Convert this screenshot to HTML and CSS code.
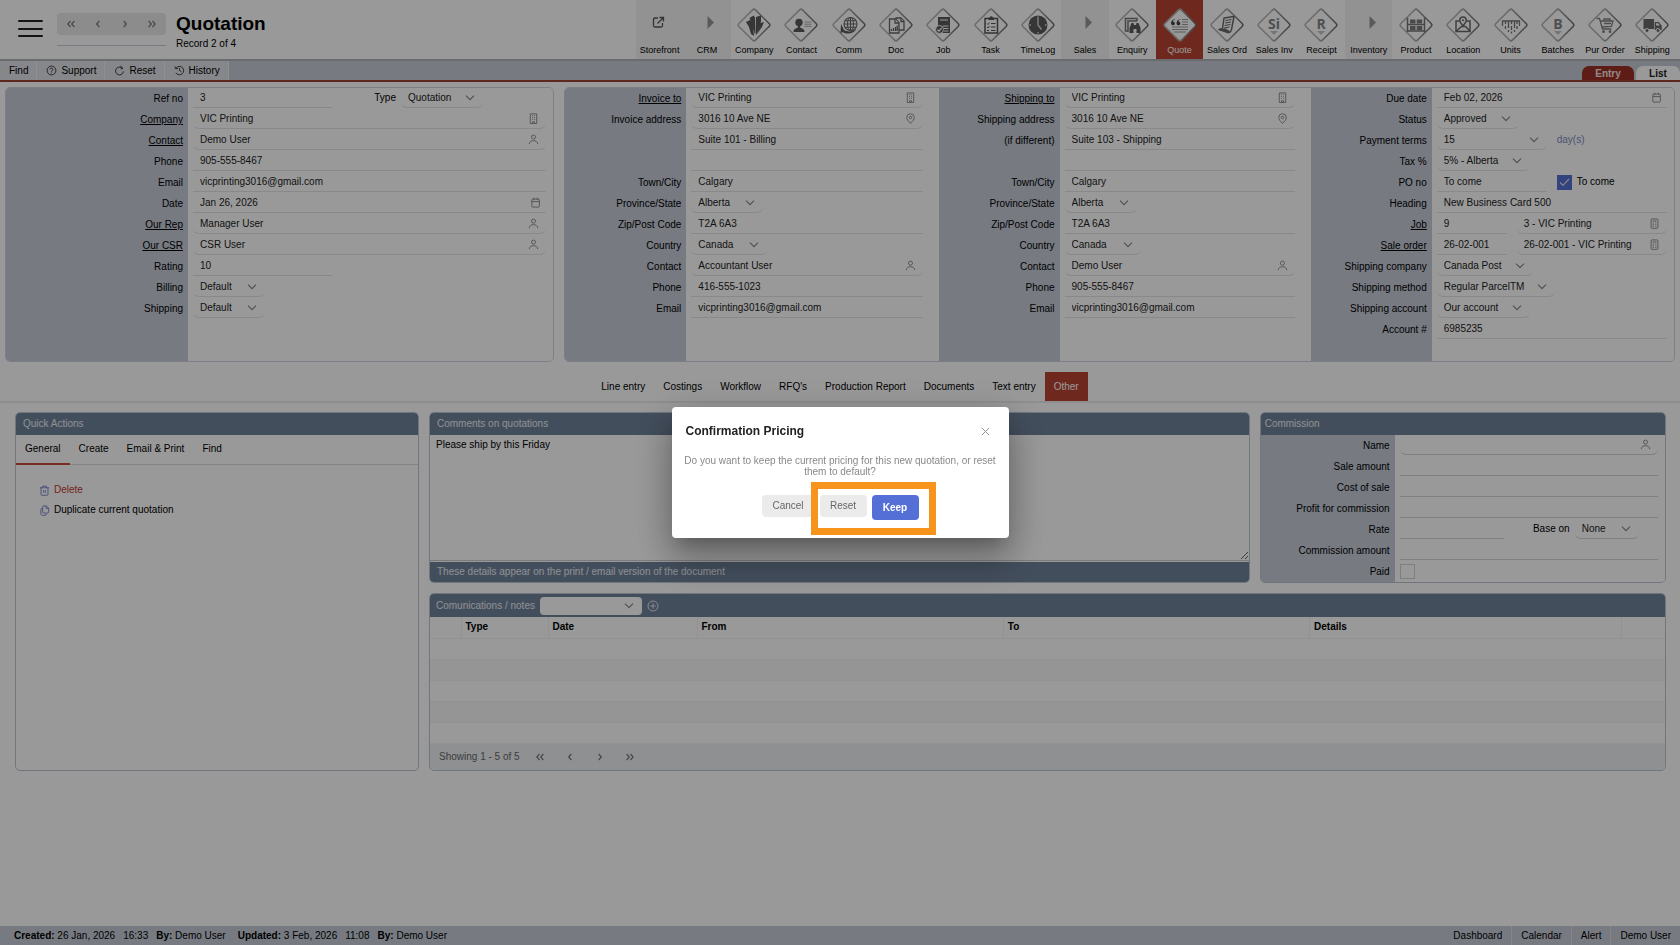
FILE: index.html
```html
<!DOCTYPE html>
<html lang="en">
<head>
<meta charset="utf-8">
<title>Quotation</title>
<link rel="stylesheet" href="styles.css">
</head>
<body>
<svg class="defs" aria-hidden="true">
  <defs>
    <linearGradient id="edge" x1="0" y1="1" x2="1" y2="0"><stop offset="0.4" stop-color="#b4b4b4"/><stop offset="1" stop-color="#6c6c6c"/></linearGradient>
    <symbol id="diamond" viewBox="0 0 36 36"><rect x="6.3" y="6.3" width="23.4" height="23.4" rx="2" transform="rotate(45 18 18)" fill="#fff" stroke="url(#edge)" stroke-width="1.5"/></symbol>
    <symbol id="person" viewBox="0 0 12 12"><circle cx="6" cy="3.4" r="2.2"/><path d="M1.4 11c.2-2.6 2-3.7 4.6-3.7s4.4 1.100 4.600 3.700"/></symbol>
    <symbol id="building" viewBox="0 0 12 12"><path d="M2.500 1h7v10.500h-7zM4.500 3h1M6.700 3h1M4.500 5h1M6.700 5h1M4.500 7h1M6.700 7h1M5 11.500v-2h2v2"/></symbol>
    <symbol id="pin" viewBox="0 0 12 12"><path d="M6 11.300C3.500 9 1.900 7 1.900 4.900a4.100 4.100 0 0 1 8.200 0C10.100 7 8.500 9 6 11.300z"/><circle cx="6" cy="4.900" r="1.300"/></symbol>
    <symbol id="calendar" viewBox="0 0 12 12"><rect x="2" y="2.200" width="8.200" height="8.800" rx="1"/><path d="M2 5h8.200M4.200 .8v2.600M8 .8v2.600"/></symbol>
    <symbol id="sheet" viewBox="0 0 12 12"><rect x="2.300" y="1" width="7.400" height="10.300" rx="1"/><path d="M4 3.200h4M4 5.400h1.400M6.800 5.400H8M4 7.300h1.400M6.800 7.300H8M4 9.200h1.400M6.800 9.200H8"/></symbol>
    <symbol id="left" viewBox="0 0 10 10"><path d="M6.100 2.500 3.900 5l2.200 2.500"/></symbol>
    <symbol id="right" viewBox="0 0 10 10"><path d="M3.900 2.500 6.100 5 3.900 7.500"/></symbol>
    <symbol id="first" viewBox="0 0 10 10"><path d="M4.600 2.500 2.400 5l2.200 2.500M7.800 2.500 5.600 5l2.200 2.500"/></symbol>
    <symbol id="last" viewBox="0 0 10 10"><path d="M2.200 2.500 4.400 5 2.200 7.500M5.400 2.500 7.600 5 5.400 7.500"/></symbol>
  </defs>
</svg>

<header class="top">
  <button class="burger" aria-label="Menu"><span></span><span></span><span></span></button>
  <div class="stepper">
    <div class="steps">
      <button aria-label="First record"><svg class="ic"><use href="#first"/></svg></button>
      <button aria-label="Previous record"><svg class="ic"><use href="#left"/></svg></button>
      <button aria-label="Next record"><svg class="ic"><use href="#right"/></svg></button>
      <button aria-label="Last record"><svg class="ic"><use href="#last"/></svg></button>
    </div>
  </div>
  <div class="heading"><h1>Quotation</h1><p>Record 2 of 4</p></div>
  <nav class="modules">
    <a href="#" class="group"><svg viewBox="0 0 36 36" fill="none" stroke="#555" stroke-width="1.300"><path d="M16 11h-3a1.500 1.500 0 0 0-1.500 1.500v6A1.500 1.500 0 0 0 13 20h6a1.500 1.500 0 0 0 1.500-1.500V16M17.500 10.500h4v4M21 11l-5.500 5.500"/></svg>Storefront</a>
    <a href="#" class="group"><svg viewBox="0 0 36 36"><path d="M18.500 9l6.500 6.500-6.500 6.500z" fill="#979797"/></svg>CRM</a>
    <a href="#"><svg viewBox="0 0 36 36"><use href="#diamond"/><path d="M10 15l4-2 3 5 1 11-3-2-2-7zM13.500 11l4-2.500 1.500 2V28l-2-8zM20 10l5-1.500v6L20.500 28l-1-2zM24.500 16l3.500-1-2 5-5 7z" fill="#5a5a5a"/></svg>Company</a>
    <a href="#"><svg viewBox="0 0 36 36"><use href="#diamond"/><circle cx="16" cy="15.500" r="3.700" fill="#5a5a5a"/><path d="M10.500 25c0-3 2-3.600 4.300-4.300v-3h2.400v3c2.300.7 4.300 1.300 4.300 4.300z" fill="#5a5a5a"/><path d="M21.500 15h7M21.500 17.200h7M21.500 19.400h7" stroke="#aaa"/></svg>Contact</a>
    <a href="#"><svg viewBox="0 0 36 36"><use href="#diamond"/><g fill="none" stroke="#666" stroke-width="1.100"><circle cx="19.500" cy="17" r="6.500"/><ellipse cx="19.500" cy="17" rx="3" ry="6.500"/><path d="M13 17h13M14 13.700h11M14 20.300h11M19.500 10.500v13"/></g><path d="M10 17l3 6c4 2.500 9 1.500 12.500-1.500-2 5-9 6.500-14 3.500l-2 1.500z" fill="#5a5a5a"/></svg>Comm</a>
    <a href="#"><svg viewBox="0 0 36 36"><use href="#diamond"/><g fill="#fff" stroke="#666" stroke-width="1.300"><path d="M18 11h5l3 3v9h-8z"/><path d="M11.500 12h6l3.500 3.500V26h-9.500z"/><path d="M17 12v4h4M23 11v3.500h3"/><path d="M13.500 24v-2M15.500 24v-3M17.500 24v-4M19.200 24v-5.500"/></g></svg>Doc</a>
    <a href="#"><svg viewBox="0 0 36 36"><use href="#diamond"/><path d="M13 10h12v16H13z" fill="#5a5a5a"/><path d="M15 13h8M18 19h5.500M19 21.500h4.500M19 24h4.500" stroke="#fff"/><circle cx="14.500" cy="22.500" r="4" fill="#5a5a5a" stroke="#fff"/><path d="M12.500 22.500l1.500 1.700 2.700-3.400" fill="none" stroke="#fff" stroke-width="1.200"/></svg>Job</a>
    <a href="#"><svg viewBox="0 0 36 36"><use href="#diamond"/><path d="M12 11.500h12.500V26H12z" fill="#fff" stroke="#555" stroke-width="1.500"/><path d="M15.500 13v-2.500h1.500a1.300 1.300 0 0 1 2.600 0H21V13z" fill="#555"/><path d="M14 16.500l1 1 1.500-2M18 16.500h4.500M14 20l1 1 1.500-2M18 20h4.500M14 23.500h2M18 23.500h4.500" fill="none" stroke="#555"/></svg>Task</a>
    <a href="#"><svg viewBox="0 0 36 36"><use href="#diamond"/><circle cx="18" cy="18" r="9.500" fill="#5a5a5a"/><path d="M18 10.500V18l3.500 4.500M18 9.500v1.500M18 25v1.500M9.500 18H11M25 18h1.500" fill="none" stroke="#ddd" stroke-width="1.300"/></svg>TimeLog</a>
    <a href="#" class="group"><svg viewBox="0 0 36 36"><path d="M18.500 9l6.500 6.500-6.500 6.500z" fill="#979797"/></svg>Sales</a>
    <a href="#"><svg viewBox="0 0 36 36"><use href="#diamond"/><path d="M14 24h-2.500V11.500H23V14M14 25V14h9" fill="none" stroke="#777" stroke-width="1.500"/><path d="M15.500 26v-5l2-5h2l.5 2h2l.5-2h2l2 5v5h-4v-4h-3v4z" fill="#5a5a5a"/></svg>Enquiry</a>
    <a href="#" class="current" aria-current="page"><svg viewBox="0 0 36 36"><use href="#diamond"/><path d="M13 12c-3 .5-4 2.500-4 4.500a1.900 1.900 0 1 0 2-2c0-1 .7-1.600 2-2zM18.500 12c-3 .5-4 2.500-4 4.500a1.900 1.900 0 1 0 2-2c0-1 .7-1.600 2-2z" fill="#444"/><path d="M20 12.500h6M20 15h6M20 17.500h6M10 20h16M10 22.500h16M12 25h12" stroke="#999" stroke-width="1.200"/></svg>Quote</a>
    <a href="#"><svg viewBox="0 0 36 36"><use href="#diamond"/><path d="M15 11l10-1.500-2.500 13c-.5 3-3 3.500-5 2.500L10 22.500l3.500-1z" fill="#fff" stroke="#6a6a6a" stroke-width="1.500" stroke-linejoin="round"/><path d="M16.500 13.500l6-1M16 16l6-1M15.500 18.500l6-1M15 21l5.500-1" stroke="#666" stroke-width="1.200"/><path d="M10 22.500l8 3 3.500-1-5-3z" fill="#6a6a6a"/></svg>Sales Ord</a>
    <a href="#"><svg viewBox="0 0 36 36"><use href="#diamond"/><text x="18" y="21.500" class="glyph">Si</text><path d="M14 24h8l-4 4z" fill="#c4c4c4"/></svg>Sales Inv</a>
    <a href="#"><svg viewBox="0 0 36 36"><use href="#diamond"/><text x="18" y="21.500" class="glyph">R</text><path d="M14 24h8l-4 4z" fill="#c4c4c4"/></svg>Receipt</a>
    <a href="#" class="group"><svg viewBox="0 0 36 36"><path d="M18.500 9l6.500 6.500-6.500 6.500z" fill="#979797"/></svg>Inventory</a>
    <a href="#"><svg viewBox="0 0 36 36"><use href="#diamond"/><path d="M9.500 11v14M26.500 11v14M9.500 17.500h17M9.500 24h17" stroke="#777" stroke-width="1.500"/><path d="M12 12.500h5.500v4H12zM18.700 12.500h5.500v4h-5.500zM12 19h5.500v4.200H12zM18.700 19h5.500v4.200h-5.500z" fill="#7c7c7c"/></svg>Product</a>
    <a href="#"><svg viewBox="0 0 36 36"><use href="#diamond"/><path d="M14.500 14H11v10.500h14V14h-3.500M11.500 24l5-4.500h4l4.500 4.500" fill="none" stroke="#6a6a6a" stroke-width="1.500"/><path d="M18 19c-2-2.300-3.200-4-3.200-5.700a3.200 3.200 0 0 1 6.400 0C21.200 15 20 16.700 18 19z" fill="#fff" stroke="#6a6a6a" stroke-width="1.500"/><circle cx="18" cy="13.300" r="1" fill="#6a6a6a"/></svg>Location</a>
    <a href="#"><svg viewBox="0 0 36 36"><use href="#diamond"/><path d="M9 14h18M9.500 14v5M12.500 14v3M15.500 14v7M18.500 14v3M21.500 14v7M24 14v3M26.500 14v5M12.500 19v3M18.500 19v4M18.500 24.500v2M15.500 23v2M21.500 23v2M24 19v3" stroke="#777" stroke-width="1.300"/></svg>Units</a>
    <a href="#"><svg viewBox="0 0 36 36"><use href="#diamond"/><text x="18" y="21.500" class="glyph">B</text><path d="M14 24h8l-4 4z" fill="#c4c4c4"/></svg>Batches</a>
    <a href="#"><svg viewBox="0 0 36 36"><use href="#diamond"/><path d="M9.500 11.500h3L15.500 22h9M13.500 14h12.500l-1.500 5.500-9.500.5M17 14v-2h6v2M17 16.500h7" fill="none" stroke="#808080" stroke-width="1.300"/><circle cx="16.500" cy="24.700" r="1.400" fill="#808080"/><circle cx="23" cy="24.700" r="1.400" fill="#808080"/></svg>Pur Order</a>
    <a href="#"><svg viewBox="0 0 36 36"><use href="#diamond"/><path d="M9.500 12H20v10H9.500zM20.700 15h4l3 3.500V23h-7z" fill="#6a6a6a"/><path d="M22 16.200h2.200l1.800 2.300h-4z" fill="#fff"/><circle cx="13" cy="23.500" r="2" fill="#6a6a6a" stroke="#fff"/><circle cx="24" cy="23.500" r="2" fill="#6a6a6a" stroke="#fff"/></svg>Shipping</a>
  </nav>
</header>

<div class="toolbar">
  <button>Find</button>
  <button><svg class="tool" viewBox="0 0 12 12"><circle cx="6" cy="6" r="4.800"/><path d="M4.500 4.800a1.500 1.500 0 1 1 2.300 1.300c-.6.300-.8.500-.8 1.100M6 8.200v.8"/></svg>Support</button>
  <button><svg class="tool" viewBox="0 0 12 12"><path d="M9.800 4.500A4.300 4.300 0 1 0 10.300 7M7 1.200l2 1.600-1.600 2"/></svg>Reset</button>
  <button><svg class="tool" viewBox="0 0 12 12"><path d="M2.300 3.300A4.600 4.600 0 1 1 2 8.500M1 1.500l.8 2.700 2.700-.5M6 3.500V6l2 1.300"/></svg>History</button>
  <div class="views"><a href="#" class="on">Entry</a><a href="#">List</a></div>
</div>

<main>
  <section class="record">
    <form class="card">
      <div class="fields main-fields">
        <label for="ref">Ref no</label><div class="cell"><input id="ref" class="w139" value="3"><label for="type" class="inline type-label">Type</label><select id="type" class="w82"><option>Quotation</option></select></div>
        <label for="company"><a href="#">Company</a></label><div class="cell"><span class="pick"><input id="company" value="VIC Printing"><svg class="ic"><use href="#building"/></svg></span></div>
        <label for="contact"><a href="#">Contact</a></label><div class="cell"><span class="pick"><input id="contact" value="Demo User"><svg class="ic"><use href="#person"/></svg></span></div>
        <label for="phone">Phone</label><div class="cell"><input id="phone" value="905-555-8467"></div>
        <label for="email">Email</label><div class="cell"><input id="email" value="vicprinting3016@gmail.com"></div>
        <label for="date">Date</label><div class="cell"><span class="pick flat"><input id="date" value="Jan 26, 2026"><svg class="ic"><use href="#calendar"/></svg></span></div>
        <label for="rep"><a href="#">Our Rep</a></label><div class="cell"><span class="pick"><input id="rep" value="Manager User"><svg class="ic"><use href="#person"/></svg></span></div>
        <label for="csr"><a href="#">Our CSR</a></label><div class="cell"><span class="pick"><input id="csr" value="CSR User"><svg class="ic"><use href="#person"/></svg></span></div>
        <label for="rating">Rating</label><div class="cell"><input id="rating" class="w139" value="10"></div>
        <label for="billing">Billing</label><div class="cell"><select id="billing" class="w72"><option>Default</option></select></div>
        <label for="shipping">Shipping</label><div class="cell"><select id="shipping" class="w72"><option>Default</option></select></div>
      </div>
    </form>
    <form class="card wide">
      <div class="fields address">
        <label for="inv"><a href="#">Invoice to</a></label><div class="cell"><span class="pick"><input id="inv" value="VIC Printing"><svg class="ic"><use href="#building"/></svg></span></div>
        <label for="ia1">Invoice address</label><div class="cell"><span class="pick"><input id="ia1" value="3016 10 Ave NE"><svg class="ic"><use href="#pin"/></svg></span></div>
        <span></span><div class="cell"><input aria-label="Invoice address line 2" value="Suite 101 - Billing"></div>
        <span></span><div class="cell"><input aria-label="Invoice address line 3"></div>
        <label for="icity">Town/City</label><div class="cell"><input id="icity" value="Calgary"></div>
        <label for="iprov">Province/State</label><div class="cell"><select id="iprov" class="w72"><option>Alberta</option></select></div>
        <label for="izip">Zip/Post Code</label><div class="cell"><input id="izip" value="T2A 6A3"></div>
        <label for="icountry">Country</label><div class="cell"><select id="icountry" class="w76"><option>Canada</option></select></div>
        <label for="icontact">Contact</label><div class="cell"><span class="pick"><input id="icontact" value="Accountant User"><svg class="ic"><use href="#person"/></svg></span></div>
        <label for="iphone">Phone</label><div class="cell"><input id="iphone" value="416-555-1023"></div>
        <label for="iemail">Email</label><div class="cell"><input id="iemail" value="vicprinting3016@gmail.com"></div>
      </div>
      <div class="fields address">
        <label for="shp"><a href="#">Shipping to</a></label><div class="cell"><span class="pick"><input id="shp" value="VIC Printing"><svg class="ic"><use href="#building"/></svg></span></div>
        <label for="sa1">Shipping address</label><div class="cell"><span class="pick"><input id="sa1" value="3016 10 Ave NE"><svg class="ic"><use href="#pin"/></svg></span></div>
        <label for="sa2">(if different)</label><div class="cell"><input id="sa2" value="Suite 103 - Shipping"></div>
        <span></span><div class="cell"><input aria-label="Shipping address line 3"></div>
        <label for="scity">Town/City</label><div class="cell"><input id="scity" value="Calgary"></div>
        <label for="sprov">Province/State</label><div class="cell"><select id="sprov" class="w72"><option>Alberta</option></select></div>
        <label for="szip">Zip/Post Code</label><div class="cell"><input id="szip" value="T2A 6A3"></div>
        <label for="scountry">Country</label><div class="cell"><select id="scountry" class="w76"><option>Canada</option></select></div>
        <label for="scontact">Contact</label><div class="cell"><span class="pick"><input id="scontact" value="Demo User"><svg class="ic"><use href="#person"/></svg></span></div>
        <label for="sphone">Phone</label><div class="cell"><input id="sphone" value="905-555-8467"></div>
        <label for="semail">Email</label><div class="cell"><input id="semail" value="vicprinting3016@gmail.com"></div>
      </div>
      <div class="fields terms">
        <label for="due">Due date</label><div class="cell"><span class="pick flat"><input id="due" value="Feb 02, 2026"><svg class="ic"><use href="#calendar"/></svg></span></div>
        <label for="status">Status</label><div class="cell"><select id="status" class="w82"><option>Approved</option></select></div>
        <label for="pay">Payment terms</label><div class="cell"><select id="pay" class="w110"><option>15</option></select><span class="unit">day(s)</span></div>
        <label for="tax">Tax %</label><div class="cell"><select id="tax" class="w93"><option>5% - Alberta</option></select></div>
        <label for="po">PO no</label><div class="cell"><input id="po" class="w110" value="To come"><label class="tick"><input type="checkbox" checked>To come</label></div>
        <label for="head">Heading</label><div class="cell"><input id="head" value="New Business Card 500"></div>
        <label for="job"><a href="#">Job</a></label><div class="cell"><input id="job" class="w70" value="9"><span class="pick second"><input aria-label="Job name" value="3 - VIC Printing"><svg class="ic"><use href="#sheet"/></svg></span></div>
        <label for="so"><a href="#">Sale order</a></label><div class="cell"><input id="so" class="w70" value="26-02-001"><span class="pick second"><input aria-label="Sale order name" value="26-02-001 - VIC Printing"><svg class="ic"><use href="#sheet"/></svg></span></div>
        <label for="sco">Shipping company</label><div class="cell"><select id="sco" class="w96"><option>Canada Post</option></select></div>
        <label for="sme">Shipping method</label><div class="cell"><select id="sme" class="w118"><option>Regular ParcelTM</option></select></div>
        <label for="sac">Shipping account</label><div class="cell"><select id="sac" class="w93"><option>Our account</option></select></div>
        <label for="acc">Account #</label><div class="cell"><input id="acc" value="6985235"></div>
      </div>
    </form>
  </section>

  <nav class="tabs">
    <a href="#">Line entry</a><a href="#">Costings</a><a href="#">Workflow</a><a href="#">RFQ's</a><a href="#">Production Report</a><a href="#">Documents</a><a href="#">Text entry</a><a href="#" class="on">Other</a>
  </nav>

  <div class="other">
    <section class="panel quick">
      <h2>Quick Actions</h2>
      <nav class="subtabs"><a href="#" class="on">General</a><a href="#">Create</a><a href="#">Email &amp; Print</a><a href="#">Find</a></nav>
      <ul class="actions">
        <li><button class="danger"><svg class="act" viewBox="0 0 12 12"><path d="M1 3h10M4 3V1.200h4V3M2.200 3v7.200a1 1 0 0 0 1 1h5.600a1 1 0 0 0 1-1V3M5 5.500v3M7 5.500v3"/></svg>Delete</button></li>
        <li><button><svg class="act" viewBox="0 0 12 12"><path d="M4 2.500A1.300 1.300 0 0 1 5.300 1H8l2.500 2.500v4a1.300 1.300 0 0 1-1.300 1.300H5.300A1.300 1.300 0 0 1 4 7.500zM7.700 1v2.700h2.700M4 3.300a2 2 0 0 0-2 2V9.300a2 2 0 0 0 2 2h2.500a2 2 0 0 0 1.800-1.800"/></svg>Duplicate current quotation</button></li>
      </ul>
    </section>

    <div class="right">
      <section class="panel comments">
        <h2><label for="notes">Comments on quotations</label></h2>
        <textarea id="notes">Please ship by this Friday</textarea>
        <p class="bar">These details appear on the print / email version of the document</p>
      </section>

      <form class="panel commission">
        <h2>Commission</h2>
        <div class="fields comm">
          <label for="cname">Name</label><div class="cell"><span class="pick"><input id="cname"><svg class="ic"><use href="#person"/></svg></span></div>
          <label for="camt">Sale amount</label><div class="cell"><input id="camt"></div>
          <label for="ccost">Cost of sale</label><div class="cell"><input id="ccost"></div>
          <label for="cprof">Profit for commission</label><div class="cell"><input id="cprof"></div>
          <label for="crate">Rate</label><div class="cell"><input id="crate" class="w104"><label for="cbase" class="inline base-label">Base on</label><select id="cbase" class="w64"><option>None</option></select></div>
          <label for="cam">Commission amount</label><div class="cell"><input id="cam"></div>
          <label for="paid">Paid</label><div class="cell"><input id="paid" type="checkbox"></div>
        </div>
      </form>

      <section class="panel log">
        <div class="log-head"><label for="note">Comunications / notes</label><select id="note"><option></option></select><button aria-label="Add note"><svg viewBox="0 0 12 12"><circle cx="6" cy="6" r="5"/><path d="M6 3.300v5.400M3.300 6h5.400"/></svg></button></div>
        <table>
          <colgroup><col class="c0"><col class="c1"><col class="c2"><col class="c3"><col class="c3"><col class="c4"><col></colgroup>
          <thead><tr><th></th><th>Type</th><th>Date</th><th>From</th><th>To</th><th>Details</th><th></th></tr></thead>
          <tbody>
            <tr><td colspan="7"></td></tr><tr><td colspan="7"></td></tr><tr><td colspan="7"></td></tr><tr><td colspan="7"></td></tr><tr><td colspan="7"></td></tr>
          </tbody>
        </table>
        <div class="pager"><span>Showing 1 - 5 of 5</span>
          <button aria-label="First page"><svg class="ic"><use href="#first"/></svg></button>
          <button aria-label="Previous page"><svg class="ic"><use href="#left"/></svg></button>
          <button aria-label="Next page"><svg class="ic"><use href="#right"/></svg></button>
          <button aria-label="Last page"><svg class="ic"><use href="#last"/></svg></button>
        </div>
      </section>
    </div>
  </div>
</main>

<footer>
  <div class="stamps"><span><b>Created:</b> 26 Jan, 2026</span><span>16:33</span><span class="by"><b>By:</b> Demo User</span><span><b>Updated:</b> 3 Feb, 2026</span><span>11:08</span><span><b>By:</b> Demo User</span></div>
  <nav class="foot-links"><a href="#">Dashboard</a><a href="#">Calendar</a><a href="#">Alert</a><a href="#">Demo User</a></nav>
</footer>

<div class="backdrop">
  <div class="dialog" role="dialog" aria-modal="true" aria-labelledby="dlg">
    <div class="dialog-head"><h2 id="dlg">Confirmation Pricing</h2><button aria-label="Close"><svg viewBox="0 0 10 10"><path d="M1 1l8 8M9 1L1 9"/></svg></button></div>
    <p>Do you want to keep the current pricing for this new quotation, or reset them to default?</p>
    <div class="choices"><button>Cancel</button><button>Reset</button><button class="primary">Keep</button></div>
    <div class="callout"></div>
  </div>
</div>
</body>
</html>
```

FILE: styles.css
```css
* { box-sizing: border-box; }
body {
  margin: 0;
  min-height: 100vh;
  display: flex;
  flex-direction: column;
  background: #fff;
  color: #000;
  font: 10px/14px "Liberation Sans", Arial, sans-serif;
}
a { color: inherit; text-decoration: none; }
button, input, select, textarea { font: inherit; color: inherit; border: 0; margin: 0; padding: 0; background: none; border-radius: 0; outline: 0; }
h1, h2, p, ul { margin: 0; padding: 0; font-size: 10px; }
.defs { position: absolute; width: 0; height: 0; }
.ic { width: 12px; height: 12px; fill: none; stroke: #777; stroke-width: 1; }

/* header */
.top { display: flex; height: 61px; padding-left: 18px; border-bottom: 2px solid #b0b2b8; }
.burger { width: 25px; margin: 20px 14px 0 0; height: 17px; display: flex; flex-direction: column; justify-content: space-between; }
.burger span { width: 25px; height: 2px; border-radius: 1px; background: #222; }
.stepper { width: 109px; height: 46px; padding-top: 13px; border-bottom: 1px solid #c6ccd8; }
.steps { display: flex; height: 22px; border-radius: 4px; background: #e9e9e9; }
.steps button { flex: 1; display: grid; place-items: center; }
.heading { margin-left: 10px; padding-top: 12px; }
.heading h1 { font-size: 19px; line-height: 24px; }
.heading p { margin-top: 1px; font-size: 10px; }
.modules { margin-left: auto; width: 1044px; padding-right: 4px; display: grid; grid-template-columns: repeat(22, 1fr); font-size: 9px; line-height: 12px; }
.modules a { display: flex; flex-direction: column; align-items: center; padding-top: 7px; white-space: nowrap; }
.modules svg { width: 36px; height: 36px; margin-bottom: 1px; }
.modules .group { background: #f3f3f3; }
.modules .current { background: #b94333; color: #fff; }
.glyph { font: bold 14px "Open Sans", sans-serif; text-anchor: middle; fill: #858585; }

/* toolbar */
.toolbar { display: flex; height: 21px; background: #c6ccd8; border-bottom: 2px solid #9d4438; }
.toolbar > button { display: flex; align-items: center; gap: 4px; padding: 0 8px 0 9px; background: #dfe1e7; border-right: 1px solid #eceef2; }
.tool { width: 11px; height: 11px; fill: none; stroke: #333; stroke-width: 1; }
.views { margin-left: auto; display: flex; gap: 2px; padding-top: 5px; }
.views a { width: 44px; text-align: center; font-weight: bold; line-height: 15px; background: #fff; border-radius: 7px 7px 0 0; color: #222; }
.views .on { width: 52px; background: #9c3023; color: #f4e4e2; }

/* record form */
main { flex: 1; padding-top: 5px; }
.record { display: grid; grid-template-columns: 549fr 1110fr; gap: 10px; padding: 0 5px; }
.card { border: 1px solid #cfd3de; border-radius: 5px; overflow: hidden; }
.wide { display: grid; grid-template-columns: 374fr 373fr 364fr; }
.fields { --side: 121px; display: grid; grid-template-columns: var(--side) 1fr; grid-template-rows: repeat(13, 21px); background: linear-gradient(to right, #c6ccd8 var(--side), #fff var(--side)); }
.main-fields { --side: 182px; }
.comm { --side: 134px; grid-template-rows: repeat(7, 21px); }
.fields > label { padding-right: 5px; text-align: right; line-height: 22px; }
.fields > label a { text-decoration: underline; }
.cell { display: flex; min-width: 0; padding: 0 16px 1px 5px; color: #222; }
.main-fields .cell, .terms .cell, .comm .cell { padding-right: 7px; }
.cell input, .cell select { min-width: 0; height: 20px; border-bottom: 1px solid #e4e4e6; padding: 0 0 1px 7px; }
.cell select { padding: 1px 0 0 7px; }
.cell > input:not([class]):not([type]) { flex: 1; }
.pick { position: relative; flex: 1; display: flex; min-width: 0; }
.pick input { flex: 1; border-radius: 0 0 6px 6px; }
.pick.flat input { border-radius: 0; }
.pick .ic { position: absolute; right: 7px; top: 4px; width: 11px; height: 11px; stroke: #888; }
.pick.flat .ic { right: 5px; }
.pick.second { margin-left: 10px; }
.comm input, .comm select { border-color: #d4d4d8; }
select {
  appearance: none;
  background: url("data:image/svg+xml,%3Csvg xmlns='http://www.w3.org/2000/svg' width='10' height='6'%3E%3Cpath d='M1 .7l4 4 4-4' fill='none' stroke='%23888' stroke-width='1.200'/%3E%3C/svg%3E") no-repeat right 8px center;
  border-radius: 0 0 6px 6px;
}
.inline { text-align: right; line-height: 20px; color: #000; padding-right: 5px; }
.type-label { width: 69px; }
.base-label { width: 71px; }
.w64 { width: 64px; }
.w70 { width: 70px; }
.w72 { width: 72px; }
.w76 { width: 76px; }
.w82 { width: 82px; }
.w93 { width: 93px; }
.w96 { width: 96px; }
.w104 { width: 104px; }
.w110 { width: 110px; }
.w118 { width: 118px; }
.w139 { width: 139px; }
.unit { padding-left: 10px; line-height: 20px; color: #7f8bc0; }
.tick { display: flex; align-items: center; gap: 5px; padding-left: 10px; color: #000; }
.cell input[type="checkbox"] { appearance: none; align-self: center; width: 15px; height: 15px; padding: 0; border: 1px solid #d4d4d4; }
.cell input[type="checkbox"]:checked { border: 0; background: #5470d6 url("data:image/svg+xml,%3Csvg xmlns='http://www.w3.org/2000/svg' width='11' height='9'%3E%3Cpath d='M1 4.500l3 3 6-6.500' fill='none' stroke='%23ddd' stroke-width='1.200'/%3E%3C/svg%3E") no-repeat center; }

/* tabs */
.tabs { display: flex; justify-content: center; margin-top: 10px; border-bottom: 2px solid #ededed; }
.tabs a { padding: 0 9px; line-height: 29px; }
.tabs .on { background: #b94333; color: #fff; }

/* lower panels */
.other { display: grid; grid-template-columns: 404fr 1237fr; gap: 10px; padding: 9px 14px 0 15px; }
.right { display: grid; grid-template-columns: 820fr 406fr; gap: 10px; }
.panel { border: 1px solid #bcc3d0; border-radius: 5px; overflow: hidden; background: #fff; }
.panel h2, .bar { padding-left: 7px; line-height: 22px; background: #70829b; color: #eef0f4; font-weight: normal; }
.panel.commission h2 { padding-left: 4px; }
.subtabs { display: flex; border-bottom: 1px solid #ddd; }
.subtabs a { padding: 0 9px; line-height: 28px; margin-bottom: -1px; border-bottom: 2px solid transparent; }
.subtabs .on { border-color: #c64a38; }
.actions { list-style: none; padding: 15px 0 0 23px; }
.actions button { display: flex; align-items: center; gap: 4px; height: 20px; }
.act { width: 11px; height: 11px; fill: none; stroke: #7880c8; stroke-width: 1; }
.danger { color: #c43a30; }
.comments { display: flex; flex-direction: column; }
textarea { flex: 1; width: 100%; min-height: 100px; padding: 3px 6px; border-bottom: 1px solid #ccc; margin-bottom: 1px; resize: vertical; }
.panel .bar { line-height: 20px; }
.log { grid-column: 1 / -1; }
.log-head { display: flex; align-items: center; gap: 5px; height: 23px; padding-left: 6px; background: #70829b; color: #eef0f4; }
.log-head select { width: 102px; height: 18px; background-color: #fff; border-radius: 4px; }
.log-head button { display: grid; }
.log-head svg { width: 12px; height: 12px; fill: none; stroke: #e6e9ee; }
table { width: 100%; table-layout: fixed; border-collapse: collapse; }
.c0 { width: 31px; }
.c1 { width: 87px; }
.c2 { width: 149px; }
.c3 { width: 24.8%; }
.c4 { width: 25.3%; }
th { height: 21px; padding: 0 0 0 4px; text-align: left; border-right: 1px solid #f4f4f4; border-bottom: 1px solid #f4f4f4; }
th:last-child { border-right: 0; }
td { height: 21px; padding: 0; }
tbody tr:nth-child(even) { background: #f9f9f9; }
tbody tr { border-bottom: 1px solid #f4f4f4; }
.pager { display: flex; align-items: center; height: 26px; padding-left: 9px; background: #eef0f4; color: #666; }
.pager span { margin-right: 5px; }
.pager button { width: 30px; display: grid; place-items: center; }

/* footer */
footer { display: flex; justify-content: space-between; height: 19px; padding-left: 14px; background: #c6ccd8; line-height: 20px; }
.stamps { display: flex; gap: 8px; }
.stamps .by { margin-right: 4px; }
.foot-links { display: flex; }
.foot-links a { padding: 0 9px; border-left: 1px solid #dcdfe8; }
.foot-links a:first-child { border-left: 0; }

/* dialog */
.backdrop { position: fixed; inset: 0; display: grid; place-items: center; background: rgba(0, 0, 0, 0.4); }
.dialog { position: relative; width: 337px; height: 131px; padding: 16px 8px 0; border-radius: 4px; background: #fff; box-shadow: 0 11px 15px -7px rgba(0, 0, 0, 0.2), 0 20px 36px 3px rgba(0, 0, 0, 0.24), 0 8px 40px 6px rgba(0, 0, 0, 0.12); }
.dialog-head { display: flex; justify-content: space-between; align-items: center; padding: 0 11px 0 6px; }
.dialog-head h2 { font-size: 12px; line-height: 16px; color: #222; }
.dialog-head svg { display: block; width: 9px; height: 9px; fill: none; stroke: #888; }
.dialog p { margin-top: 16px; text-align: center; line-height: 11px; color: #888; }
.choices { display: flex; align-items: flex-start; gap: 5px; margin-top: 18px; padding-left: 82px; }
.choices button { height: 22px; min-width: 47px; padding: 0 10px; border-radius: 4px; background: #ebebeb; color: #666; }
.choices button:first-child { min-width: 53px; }
.choices .primary { height: 25px; padding: 0 11px; background: #5470d6; color: #fff; font-weight: bold; }
.callout { position: absolute; left: 139px; top: 75px; width: 125px; height: 53px; border: 7px solid #f7941d; }
```
